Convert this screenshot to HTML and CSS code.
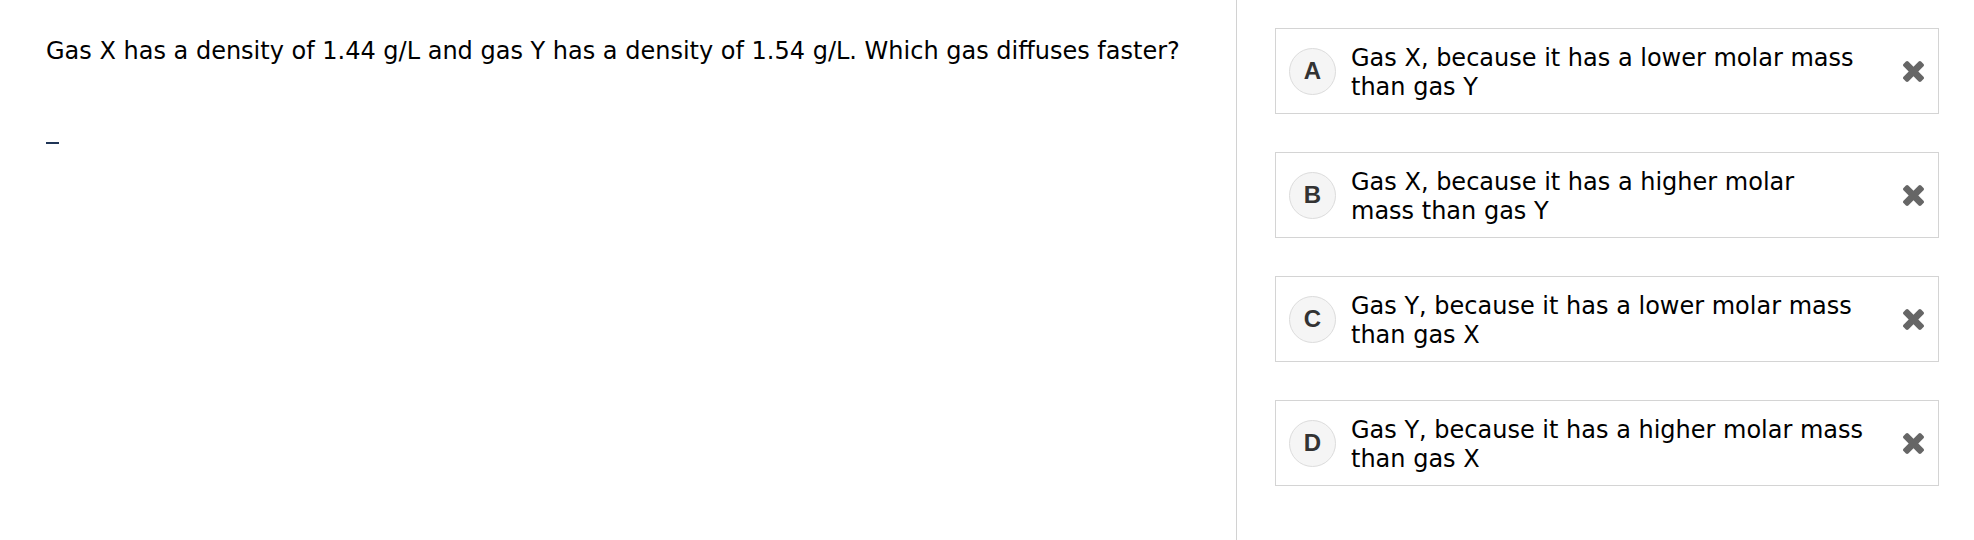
FILE: index.html
```html
<!DOCTYPE html>
<html lang="en">
<head>
  <meta charset="UTF-8" />
  <meta name="viewport" content="width=device-width, initial-scale=1.0"/>
  <title>Quiz question</title>
  <link rel="stylesheet" href="styles.css">
</head>
<body>
  <div class="quiz">
    <div class="question-pane">
      <p class="question">Gas X has a density of 1.44 g/L and gas Y has a density of 1.54 g/L. Which gas diffuses faster?</p>
      <span class="answer-blank"></span>
    </div>

    <div class="answers-pane">
      <div class="choice">
        <span class="choice-letter">A</span>
        <span class="choice-text">Gas X, because it has a lower molar mass than gas Y</span>
        <button class="choice-remove" aria-label="Remove choice A">
          <svg viewBox="110 366 1188 1188"><path d="M1298 1322q0 40-28 68l-136 136q-28 28-68 28t-68-28l-294-294-294 294q-28 28-68 28t-68-28l-136-136q-28-28-28-68t28-68l294-294-294-294q-28-28-28-68t28-68l136-136q28-28 68-28t68 28l294 294 294-294q28-28 68-28t68 28l136 136q28 28 28 68t-28 68l-294 294 294 294q28 28 28 68z"/></svg>
        </button>
      </div>

      <div class="choice">
        <span class="choice-letter">B</span>
        <span class="choice-text">Gas X, because it has a higher molar mass than gas Y</span>
        <button class="choice-remove" aria-label="Remove choice B">
          <svg viewBox="110 366 1188 1188"><path d="M1298 1322q0 40-28 68l-136 136q-28 28-68 28t-68-28l-294-294-294 294q-28 28-68 28t-68-28l-136-136q-28-28-28-68t28-68l294-294-294-294q-28-28-28-68t28-68l136-136q28-28 68-28t68 28l294 294 294-294q28-28 68-28t68 28l136 136q28 28 28 68t-28 68l-294 294 294 294q28 28 28 68z"/></svg>
        </button>
      </div>

      <div class="choice">
        <span class="choice-letter">C</span>
        <span class="choice-text">Gas Y, because it has a lower molar mass than gas X</span>
        <button class="choice-remove" aria-label="Remove choice C">
          <svg viewBox="110 366 1188 1188"><path d="M1298 1322q0 40-28 68l-136 136q-28 28-68 28t-68-28l-294-294-294 294q-28 28-68 28t-68-28l-136-136q-28-28-28-68t28-68l294-294-294-294q-28-28-28-68t28-68l136-136q28-28 68-28t68 28l294 294 294-294q28-28 68-28t68 28l136 136q28 28 28 68t-28 68l-294 294 294 294q28 28 28 68z"/></svg>
        </button>
      </div>

      <div class="choice">
        <span class="choice-letter">D</span>
        <span class="choice-text">Gas Y, because it has a higher molar mass than gas X</span>
        <button class="choice-remove" aria-label="Remove choice D">
          <svg viewBox="110 366 1188 1188"><path d="M1298 1322q0 40-28 68l-136 136q-28 28-68 28t-68-28l-294-294-294 294q-28 28-68 28t-68-28l-136-136q-28-28-28-68t28-68l294-294-294-294q-28-28-28-68t28-68l136-136q28-28 68-28t68 28l294 294 294-294q28-28 68-28t68 28l136 136q28 28 28 68t-28 68l-294 294 294 294q28 28 28 68z"/></svg>
        </button>
      </div>
    </div>
  </div>
</body>
</html>
```

FILE: styles.css
```css
* {
  margin: 0;
  padding: 0;
  box-sizing: border-box;
}

body {
  font-family: "DejaVu Sans", Verdana, sans-serif;
  color: #000;
  background: #fff;
}

.quiz {
  display: flex;
  height: 100vh;
}

.question-pane {
  width: 1236px;
  padding: 37px 0 0 46px;
}

.question {
  font-size: 24px;
  line-height: 28px;
}

.answer-blank {
  display: block;
  width: 13px;
  margin-top: 77px;
  border-bottom: 2px solid #1f3556;
}

.answers-pane {
  flex: 1;
  border-left: 1px solid #d2d2d2;
  padding: 28px 35px 0 38px;
  display: flex;
  flex-direction: column;
  gap: 38px;
}

.choice {
  height: 86px;
  border: 1px solid #d4d4d4;
  padding: 0 14px 0 13px;
  display: flex;
  align-items: center;
}

.choice-letter {
  width: 47px;
  height: 47px;
  flex-shrink: 0;
  border-radius: 50%;
  border: 1px solid #dcdcdc;
  background: #f5f5f5;
  color: #333;
  font-family: "Liberation Sans", Arial, sans-serif;
  font-size: 24px;
  font-weight: bold;
  display: flex;
  justify-content: center;
  align-items: center;
  margin-right: 15px;
}

.choice-text {
  width: 513px;
  padding-top: 4px;
  font-size: 24px;
  line-height: 29px;
}

.choice-remove {
  margin-left: auto;
  border: none;
  background: none;
  cursor: pointer;
  width: 21px;
  height: 21px;
  display: flex;
}

.choice-remove svg {
  width: 21px;
  height: 21px;
  fill: #666;
}
```
